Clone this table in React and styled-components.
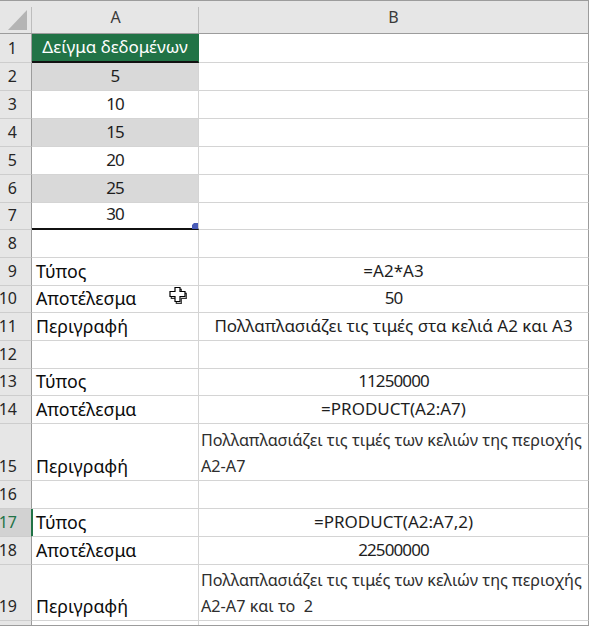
import React from "react";
import styled, { createGlobalStyle } from "styled-components";

const FONT = `"Noto Sans", "Open Sans", "DejaVu Sans", sans-serif`;
const GRID = "#d4d4d4";
const FRAME = "#9c9c9c";
const HEAD_LINE = "#cdcdcd";
const GREEN = "#217346";
const BAND = "#d9d9d9";

const Global = createGlobalStyle`
  html, body { margin: 0; padding: 0; background: #fff; }
  body { width: 589px; height: 627px; overflow: hidden; font-family: ${FONT}; }
  * { box-sizing: border-box; }
`;

const Sheet = styled.div`
  position: relative;
  width: 589px;
  border-bottom: 1px solid ${FRAME};
  font-family: ${FONT};
`;

const Row = styled.div`
  display: grid;
  grid-template-columns: 32px 167px 390px;
  grid-template-rows: ${(p) => p.$h}px;
  height: ${(p) => p.$h}px;
`;

const HeaderRow = styled(Row)`
  border-top: 1px solid ${FRAME};
  border-bottom: 1px solid ${FRAME};
  background: #e6e6e6;
  grid-template-rows: 32px;
`;

const Corner = styled.div`
  position: relative;
  &::after {
    content: "";
    position: absolute;
    right: 0;
    top: 6px;
    bottom: 0;
    width: 1px;
    background: #bdbdbd;
  }
  svg { position: absolute; left: 8px; top: 9px; }
`;

const ColHead = styled.div`
  position: relative;
  display: flex;
  align-items: center;
  justify-content: center;
  font-size: 16px;
  color: #3a3a3a;
  border-right: ${(p) => (p.$last ? `1px solid ${FRAME}` : "none")};
  &::after {
    content: "";
    display: ${(p) => (p.$last ? "none" : "block")};
    position: absolute;
    right: 0;
    top: 6px;
    bottom: 0;
    width: 1px;
    background: #bdbdbd;
  }
`;

const RowHead = styled.div`
  display: flex;
  align-items: flex-end;
  justify-content: flex-end;
  overflow: hidden;
  padding: 0 14px 1px 0;
  line-height: 26px;
  font-size: 16px;
  background: ${(p) => (p.$active ? "#d2d2d2" : "#e6e6e6")};
  color: ${(p) => (p.$active ? GREEN : "#262626")};
  border-right: 1px solid ${(p) => (p.$active ? GREEN : FRAME)};
  border-bottom: ${(p) => (p.$noLine ? "none" : `1px solid ${HEAD_LINE}`)};
`;

const Cell = styled.div`
  position: relative;
  display: flex;
  align-items: flex-end;
  justify-content: ${(p) => (p.$center ? "center" : "flex-start")};
  text-align: ${(p) => (p.$center ? "center" : "left")};
  padding: 0 ${(p) => p.$pad ?? 4}px 1px ${(p) => p.$pad ?? 4}px;
  line-height: 26px;
  font-size: ${(p) => p.$size || 17}px;
  letter-spacing: ${(p) => (p.$num ? "-0.9px" : "normal")};
  white-space: nowrap;
  color: ${(p) => p.$color || "#1e1e1e"};
  background: ${(p) => p.$bg || "#fff"};
  border-bottom: ${(p) => p.$bottom || `1px solid ${GRID}`};
  border-right: 1px solid ${(p) => p.$right || GRID};
  box-shadow: ${(p) => (p.$selected ? `inset 1px 0 0 ${GREEN}` : "none")};
`;

const Lines = styled.div`
  display: flex;
  flex-direction: column;
  font-size: 16.2px;
  color: #2e2e2e;
`;

const Handle = styled.svg`
  position: absolute;
  right: 0;
  bottom: -1px;
`;

const Cursor = styled.svg`
  position: absolute;
  left: 169px;
  top: 287px;
`;

const THICK = "2px solid #111";

const rows = [
  { n: 1, h: 29, a: "Δείγμα δεδομένων", aCenter: true, header: true },
  { n: 2, h: 28, a: "5", aCenter: true, band: true, num: true },
  { n: 3, h: 28, a: "10", aCenter: true, num: true },
  { n: 4, h: 28, a: "15", aCenter: true, band: true, num: true },
  { n: 5, h: 28, a: "20", aCenter: true, num: true },
  { n: 6, h: 28, a: "25", aCenter: true, band: true, num: true },
  { n: 7, h: 27, a: "30", aCenter: true, last: true, num: true },
  { n: 8, h: 28 },
  { n: 9, h: 28, a: "Τύπος", b: "=A2*A3" },
  { n: 10, h: 27, a: "Αποτέλεσμα", b: "50", bNum: true },
  { n: 11, h: 28, a: "Περιγραφή", b: "Πολλαπλασιάζει τις τιμές στα κελιά A2 και A3" },
  { n: 12, h: 28 },
  { n: 13, h: 27, a: "Τύπος", b: "11250000", bNum: true },
  { n: 14, h: 28, a: "Αποτέλεσμα", b: "=PRODUCT(A2:A7)" },
  {
    n: 15,
    h: 57,
    a: "Περιγραφή",
    lines: ["Πολλαπλασιάζει τις τιμές των κελιών της περιοχής", "A2-A7"],
  },
  { n: 16, h: 28 },
  { n: 17, h: 28, a: "Τύπος", b: "=PRODUCT(A2:A7,2)", active: true },
  { n: 18, h: 28, a: "Αποτέλεσμα", b: "22500000", bNum: true },
  {
    n: 19,
    h: 56,
    a: "Περιγραφή",
    lines: ["Πολλαπλασιάζει τις τιμές των κελιών της περιοχής", "A2-A7 και το\u00a0 2"],
  },
];

function SheetRow({ r }) {
  let aProps = {};
  if (r.header) aProps = { $bg: GREEN, $color: "#fff", $bottom: THICK, $right: GREEN };
  else if (r.band) aProps = { $bg: BAND };
  else if (r.last) aProps = { $bottom: THICK };
  const label = !r.aCenter && r.a;
  return (
    <Row $h={r.h}>
      <RowHead $active={r.active}>{r.n}</RowHead>
      <Cell
        $center={r.aCenter}
        $selected={r.active}
        $num={r.num}
        $size={label ? 17.8 : 17}
        $color={label ? "#0c0c0c" : undefined}
        {...aProps}
      >
        {r.a}
        {r.last && (
          <Handle width="6" height="6" viewBox="0 0 6 6">
            <polygon points="2,0 6,0 6,6 0,6 0,2" fill="#4a5cb8" />
          </Handle>
        )}
      </Cell>
      {r.lines ? (
        <Cell $right={FRAME} $pad={2}>
          <Lines>
            {r.lines.map((l) => (
              <span key={l}>{l}</span>
            ))}
          </Lines>
        </Cell>
      ) : (
        <Cell $right={FRAME} $center $num={r.bNum}>
          {r.b}
        </Cell>
      )}
    </Row>
  );
}

export default function App() {
  return (
    <>
      <Global />
      <Sheet>
        <HeaderRow $h={34}>
          <Corner>
            <svg width="20" height="21" viewBox="0 0 20 21">
              <polygon points="19,0 19,20 0,20" fill="#b4b4b4" />
            </svg>
          </Corner>
          <ColHead>A</ColHead>
          <ColHead $last>B</ColHead>
        </HeaderRow>
        {rows.map((r) => (
          <SheetRow key={r.n} r={r} />
        ))}
        <Row $h={4}>
          <RowHead $noLine />
          <Cell $bottom="none" />
          <Cell $bottom="none" $right={FRAME} />
        </Row>
        <Cursor width="18" height="17" viewBox="0 0 18 17">
          <polygon
            points="6.5,1.5 11.5,1.5 11.5,5.5 16.5,5.5 16.5,10.5 11.5,10.5 11.5,15.5 6.5,15.5 6.5,10.5 1.5,10.5 1.5,5.5 6.5,5.5"
            fill="none"
            stroke="#333"
            strokeWidth="1.2"
            transform="translate(0.8,0.8)"
          />
          <polygon
            points="6.5,1.5 11.5,1.5 11.5,5.5 16.5,5.5 16.5,10.5 11.5,10.5 11.5,15.5 6.5,15.5 6.5,10.5 1.5,10.5 1.5,5.5 6.5,5.5"
            fill="#fff"
            stroke="#000"
            strokeWidth="1.2"
            transform="translate(-0.5,-1)"
          />
        </Cursor>
      </Sheet>
    </>
  );
}
